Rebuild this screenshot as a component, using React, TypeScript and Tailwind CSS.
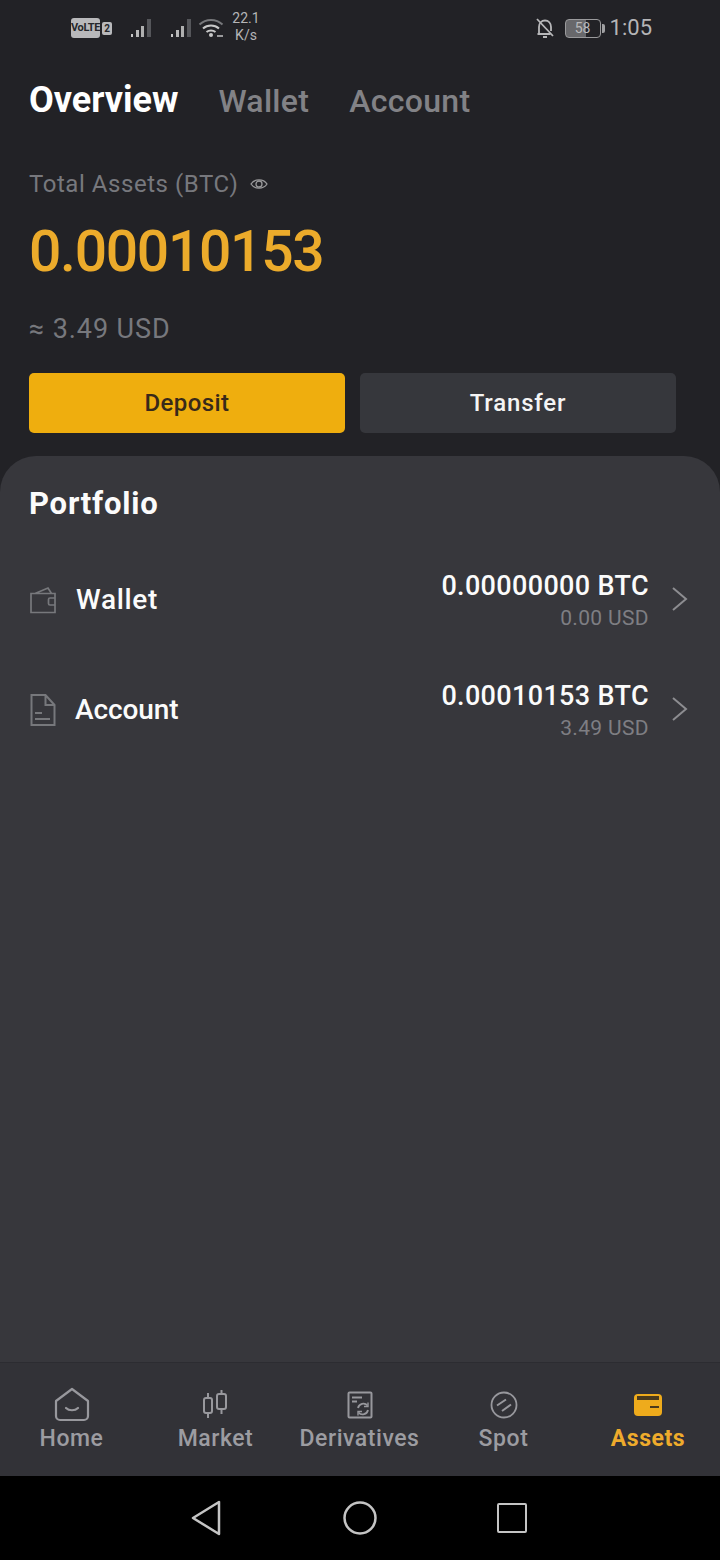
import React from "react";

function Signal() {
  return (
    <svg width="24" height="22" viewBox="0 0 24 22" fill="none">
      <rect x="1" y="17" width="2" height="3" fill="#c8c8c8" />
      <rect x="6" y="13" width="3" height="7" fill="#b8b8b8" />
      <rect x="11" y="9" width="3" height="11" fill="#b0b0b0" />
      <rect x="17" y="2" width="4" height="18" fill="#55565a" />
    </svg>
  );
}

function NavItem({ label, active, children, w }: { label: string; active?: boolean; children: React.ReactNode; w: string }) {
  return (
    <div className={`flex flex-col items-center ${w}`}>
      <div className="h-[38px] flex items-center justify-center">{children}</div>
      <span className={`text-[23px] leading-[30px] tracking-[0.55px] ${active ? "text-[#eeab2c] font-bold" : "text-[#9c9ca1] font-medium"}`}>{label}</span>
    </div>
  );
}

function Row({ icon, label, btc, usd, gap, labelClass }: { icon: React.ReactNode; label: string; btc: string; usd: string; gap: string; labelClass: string }) {
  return (
    <div className="h-[110px] flex items-center pl-[29px] pr-[32px]">
      <div className={`w-[28px] flex justify-center ${gap}`}>{icon}</div>
      <span className={`text-[28px] font-medium text-[#fbfbfb] ${labelClass}`}>{label}</span>
      <div className="ml-auto flex flex-col items-end mr-[22px] mt-[4px]">
        <span className="text-[27px] leading-[32px] font-medium text-[#fbfbfb] tracking-[0.35px]">{btc}</span>
        <span className="text-[21px] leading-[32px] text-[#7e7e83] tracking-[0.35px]">{usd}</span>
      </div>
      <svg className="-mt-[2px]" width="17" height="26" viewBox="0 0 17 26" fill="none">
        <path d="M2 2l13 11L2 24" stroke="#8d8d91" strokeWidth="2" />
      </svg>
    </div>
  );
}

export default function App() {
  return (
    <div className="w-[720px] h-[1560px] flex flex-col bg-[#222226] font-['Roboto',sans-serif] overflow-hidden">
      {/* status bar */}
      <div className="h-[56px] flex items-center pl-[71px] pr-[68px] text-[#b5b5b7]">
        <div className="flex items-center gap-[2px]">
          <span className="h-[20px] w-[29px] rounded-[3px] bg-[#b9b9bb] text-[#26272b] text-[11px] font-bold leading-[20px] text-center tracking-[-0.4px]">VoLTE</span>
          <span className="h-[13px] w-[10px] rounded-[2px] bg-[#b9b9bb] text-[#26272b] text-[10px] font-bold leading-[13px] text-center">2</span>
        </div>
        <div className="ml-[18px]"><Signal /></div>
        <div className="ml-[16px]"><Signal /></div>
        <svg className="ml-[4px]" width="26" height="22" viewBox="0 0 26 22" fill="none">
          <path d="M1.500 7.500C8 1.500 18 1.500 24.500 7.500" stroke="#77787b" strokeWidth="2" />
          <path d="M5 11.500C9.500 7.500 16.500 7.500 21 11.500" stroke="#c8c8c8" strokeWidth="2" />
          <path d="M8.500 15C11 13 15 13 17.500 15" stroke="#c8c8c8" strokeWidth="2" />
          <circle cx="13" cy="18" r="2" fill="#c8c8c8" />
          <path d="M19 19h6" stroke="#9a9a9c" strokeWidth="2" />
        </svg>
        <div className="ml-[7px] flex flex-col items-center w-[30px] text-[14px] leading-[17px] text-[#b5b5b7] -mt-[2px]">
          <span>22.1</span>
          <span>K/s</span>
        </div>
        <svg className="ml-auto" width="20" height="22" viewBox="0 0 20 22" fill="none">
          <path d="M4 16V10C4 6 6.500 3.500 10 3.500S16 6 16 10v4M2.500 17h13M8 20h4" stroke="#b8b8ba" strokeWidth="1.800" />
          <path d="M2 2l16 17" stroke="#b8b8ba" strokeWidth="1.800" />
        </svg>
        <div className="ml-[10px] flex items-center gap-[1px]">
          <div className="w-[36px] h-[19px] rounded-[4px] border border-[#9a9a9c] overflow-hidden flex items-center justify-center text-[14px] leading-none text-[#b9b9bb] bg-[linear-gradient(90deg,#68686b_58%,transparent_58%)]">58</div>
          <div className="w-[3px] h-[9px] bg-[#a0a0a2] rounded-r-[2px]" />
        </div>
        <span className="ml-[5px] text-[22px] leading-none text-[#b5b5b7]">1:05</span>
      </div>

      {/* tabs */}
      <div className="h-[88px] flex items-baseline pt-[17px] pl-[29px] gap-[40px]">
        <span className="text-[36px] font-bold text-white">Overview</span>
        <span className="text-[32px] font-medium text-[#828286] tracking-[0.3px]">Wallet</span>
        <span className="text-[32px] font-medium text-[#828286] tracking-[0.3px]">Account</span>
      </div>

      {/* balance */}
      <div className="pl-[29px] pt-[20px] flex flex-col">
        <div className="h-[39px] flex items-center">
          <span className="text-[24px] text-[#77787d] tracking-[0.55px]">Total Assets (BTC)</span>
          <svg className="ml-[12px]" width="18" height="14" viewBox="0 0 18 14" fill="none">
            <path d="M1 7C4.500 1.500 13.500 1.500 17 7C13.500 12.500 4.500 12.500 1 7Z" stroke="#9a9a9c" strokeWidth="1.300" />
            <circle cx="9" cy="7" r="3" stroke="#9a9a9c" strokeWidth="1.300" />
          </svg>
        </div>
        <div className="h-[96px] flex items-center text-[57px] font-medium text-[#ecab2b] tracking-[-1.3px] leading-none">0.00010153</div>
        <div className="mt-[10px] h-[40px] flex items-center text-[27px] text-[#77787d] tracking-[0.9px]">≈ 3.49 USD</div>
      </div>

      {/* buttons */}
      <div className="mt-[24px] pl-[29px] flex gap-[15px]">
        <div className="w-[316px] h-[60px] rounded-[5px] bg-[#efae0e] flex items-center justify-center text-[24px] font-medium text-[#38291a] tracking-[0.4px]">Deposit</div>
        <div className="w-[316px] h-[60px] rounded-[5px] bg-[#36373c] flex items-center justify-center text-[24px] font-medium text-[#f4f4f4] tracking-[0.8px]">Transfer</div>
      </div>

      {/* portfolio */}
      <div className="mt-[23px] flex-1 rounded-t-[36px] bg-[#37373c] flex flex-col">
        <div className="h-[89px] pl-[29px] pt-[24px] text-[31px] leading-[48px] font-bold text-[#fbfbfb] tracking-[0.8px]">Portfolio</div>
        <Row
          label="Wallet"
          btc="0.00000000 BTC"
          usd="0.00 USD"
          gap="mr-[19px]"
          labelClass="tracking-[0.7px]"
          icon={
            <svg width="28" height="28" viewBox="0 0 28 28" fill="none">
              <path d="M2 7.500h24v19H2zM6 7.500L19 2l3.500 5.500" stroke="#77787c" strokeWidth="1.700" />
              <path d="M26 12h-5a1.500 1.500 0 00-1.500 1.500v4A1.500 1.500 0 0021 19h5" stroke="#77787c" strokeWidth="1.700" />
            </svg>
          }
        />
        <Row
          label="Account"
          btc="0.00010153 BTC"
          usd="3.49 USD"
          gap="mr-[18px]"
          labelClass="tracking-[-0.1px]"
          icon={
            <svg width="26" height="34" viewBox="0 0 26 34" fill="none">
              <path d="M1.500 2h14l9 10v20h-23zM15.500 2v10h9" stroke="#77787c" strokeWidth="2" />
              <path d="M5 20h7M5 26h15" stroke="#77787c" strokeWidth="2" />
            </svg>
          }
        />
      </div>

      {/* bottom nav */}
      <div className="h-[114px] bg-[#323237] border-t border-[#2c2c31] flex items-start pt-[23px]">
        <NavItem label="Home" w="w-[143px]">
          <svg width="36" height="36" viewBox="0 0 36 36" fill="none">
            <path d="M2 14L18 2l16 12v15a4 4 0 01-4 4H6a4 4 0 01-4-4z" stroke="#98989d" strokeWidth="2.200" strokeLinejoin="round" />
            <path d="M12 21c3 3 9 3 12 0" stroke="#98989d" strokeWidth="2.200" strokeLinecap="round" />
          </svg>
        </NavItem>
        <NavItem label="Market" w="w-[145px]">
          <svg width="28" height="30" viewBox="0 0 28 30" fill="none">
            <rect x="2" y="8" width="8" height="15" rx="2" stroke="#98989d" strokeWidth="2" />
            <rect x="15" y="4" width="9" height="15" rx="2" stroke="#98989d" strokeWidth="2" />
            <path d="M6 3v5M6 23v5M19.500 0v4M19.500 19v5" stroke="#98989d" strokeWidth="2" />
          </svg>
        </NavItem>
        <NavItem label="Derivatives" w="w-[143px]">
          <svg width="26" height="28" viewBox="0 0 26 28" fill="none">
            <rect x="1.500" y="1.500" width="23" height="25" rx="1" stroke="#98989d" strokeWidth="2" />
            <path d="M5 6.500h10M5 10.500h5" stroke="#98989d" strokeWidth="1.800" />
            <path d="M11 17a5.500 5.500 0 019.500-2.500M21 19a5.500 5.500 0 01-9.500 2.500" stroke="#98989d" strokeWidth="1.800" />
            <path d="M21 11.500v4h-4M11 24.500v-4h4" stroke="#98989d" strokeWidth="1.400" />
          </svg>
        </NavItem>
        <NavItem label="Spot" w="w-[145px]">
          <svg width="28" height="28" viewBox="0 0 28 28" fill="none">
            <circle cx="14" cy="14" r="12.500" stroke="#98989d" strokeWidth="1.800" />
            <path d="M7 14.500L16 8.500M12 20L21 13.500" stroke="#98989d" strokeWidth="2" />
          </svg>
        </NavItem>
        <NavItem label="Assets" active w="w-[144px]">
          <svg width="28" height="24" viewBox="0 0 28 24" fill="none">
            <rect x="0" y="1" width="28" height="22" rx="4" fill="#eeab1c" />
            <rect x="3" y="3" width="22" height="4" fill="#4a3a1c" />
            <path d="M16 14h9" stroke="#4a3a1c" strokeWidth="2" />
          </svg>
        </NavItem>
      </div>

      {/* android nav */}
      <div className="h-[84px] bg-black flex items-center shrink-0 pl-[191px]">
        <svg width="30" height="36" viewBox="0 0 30 36" fill="none">
          <path d="M2 18L28 2v32z" stroke="#c4c4c4" strokeWidth="2.500" strokeLinejoin="round" />
        </svg>
        <svg className="ml-[122px]" width="34" height="34" viewBox="0 0 34 34" fill="none">
          <circle cx="17" cy="17" r="15.500" stroke="#c4c4c4" strokeWidth="2.500" />
        </svg>
        <div className="ml-[120px] w-[30px] h-[30px] rounded-[2px] border-[2.5px] border-[#c4c4c4]" />
      </div>
    </div>
  );
}
